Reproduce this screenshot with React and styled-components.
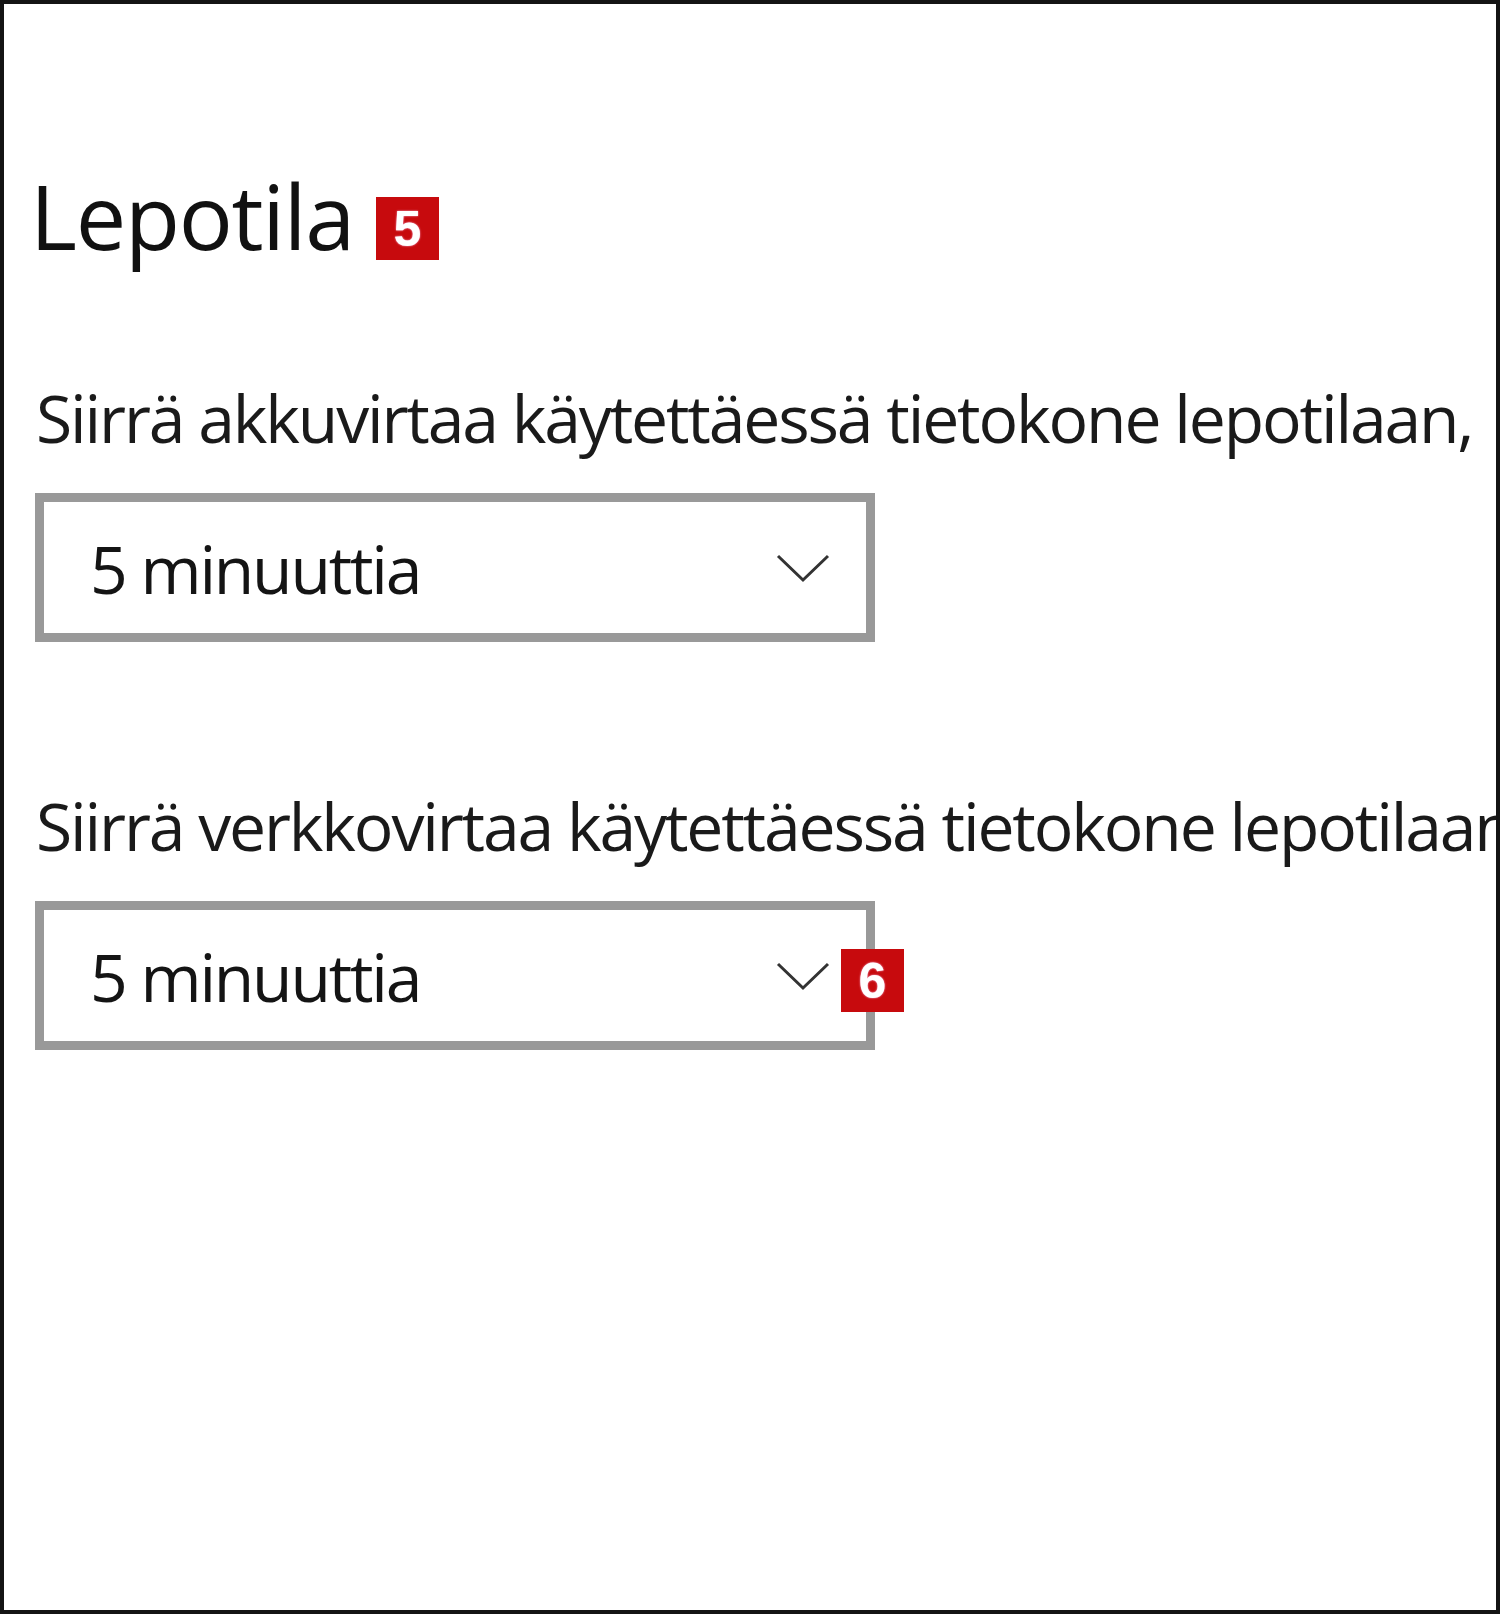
import React from "react";
import styled, { createGlobalStyle } from "styled-components";

const GlobalStyle = createGlobalStyle`
    html, body {
        margin: 0;
        padding: 0;
        background: #ffffff;
    }
    body {
        font-family: "Open Sans", "Noto Sans", "Liberation Sans", sans-serif;
        color: #111111;
    }
`;

const Frame = styled.div`
    box-sizing: border-box;
    width: 1500px;
    height: 1614px;
    border: 4px solid #141414;
    background: #ffffff;
    overflow: hidden;
    padding: 161px 0 0 30px;
`;

const TitleRow = styled.div`
    display: flex;
    align-items: flex-end;
    gap: 22px;
    height: 100px;
`;

const Title = styled.h1`
    margin: 0 0 0 -4px;
    font-size: 90px;
    font-weight: 400;
    line-height: 100px;
    letter-spacing: -1.3px;
    color: #111111;
`;

const Badge = styled.span`
    display: inline-flex;
    align-items: center;
    justify-content: center;
    width: 63px;
    height: 63px;
    background: #c70a0d;
    color: #ffffff;
    font-family: "Liberation Sans", Arial, sans-serif;
    font-weight: 700;
    font-size: 50px;
    line-height: 1;
    margin-bottom: ${(p) => p.$drop || 0}px;
    text-shadow: 0 0 2px #ffc8f0;
`;

const OverlayBadge = styled(Badge)`
    position: absolute;
    left: ${(p) => p.$left}px;
    top: ${(p) => p.$top}px;
`;

const Section = styled.section`
    display: flex;
    flex-direction: column;
    gap: 36px;
    margin-top: ${(p) => p.$top}px;
`;

const Label = styled.div`
    font-size: 66px;
    line-height: 80px;
    height: 80px;
    white-space: nowrap;
    letter-spacing: -2.15px;
    color: #1a1a1a;
    padding-left: 2px;
`;

const Select = styled.div`
    position: relative;
    box-sizing: border-box;
    display: flex;
    align-items: center;
    justify-content: space-between;
    width: 840px;
    height: 149px;
    margin-left: 1px;
    border: 9px solid #999999;
    background: #ffffff;
    padding: 0 36px 0 46px;
`;

const Value = styled.span`
    font-size: 66px;
    letter-spacing: -2.2px;
    color: #141414;
`;

const Chevron = () => (
    <svg width="54" height="30" viewBox="0 0 54 30" fill="none">
        <path d="M2 3 L27 27 L52 3" stroke="#333333" strokeWidth="3" strokeLinejoin="miter" />
    </svg>
);

const App = () => {
    return (
        <>
            <GlobalStyle />
            <Frame>
                <TitleRow>
                    <Title>Lepotila</Title>
                    <Badge $drop={5}>5</Badge>
                </TitleRow>
                <Section $top={112}>
                    <Label>Siirrä akkuvirtaa käytettäessä tietokone lepotilaan,</Label>
                    <Select>
                        <Value>5 minuuttia</Value>
                        <Chevron />
                    </Select>
                </Section>
                <Section $top={143}>
                    <Label>Siirrä verkkovirtaa käytettäessä tietokone lepotilaan, kun</Label>
                    <Select>
                        <Value>5 minuuttia</Value>
                        <Chevron />
                        <OverlayBadge $left={797} $top={39}>6</OverlayBadge>
                    </Select>
                </Section>
            </Frame>
        </>
    );
};

export default App;
